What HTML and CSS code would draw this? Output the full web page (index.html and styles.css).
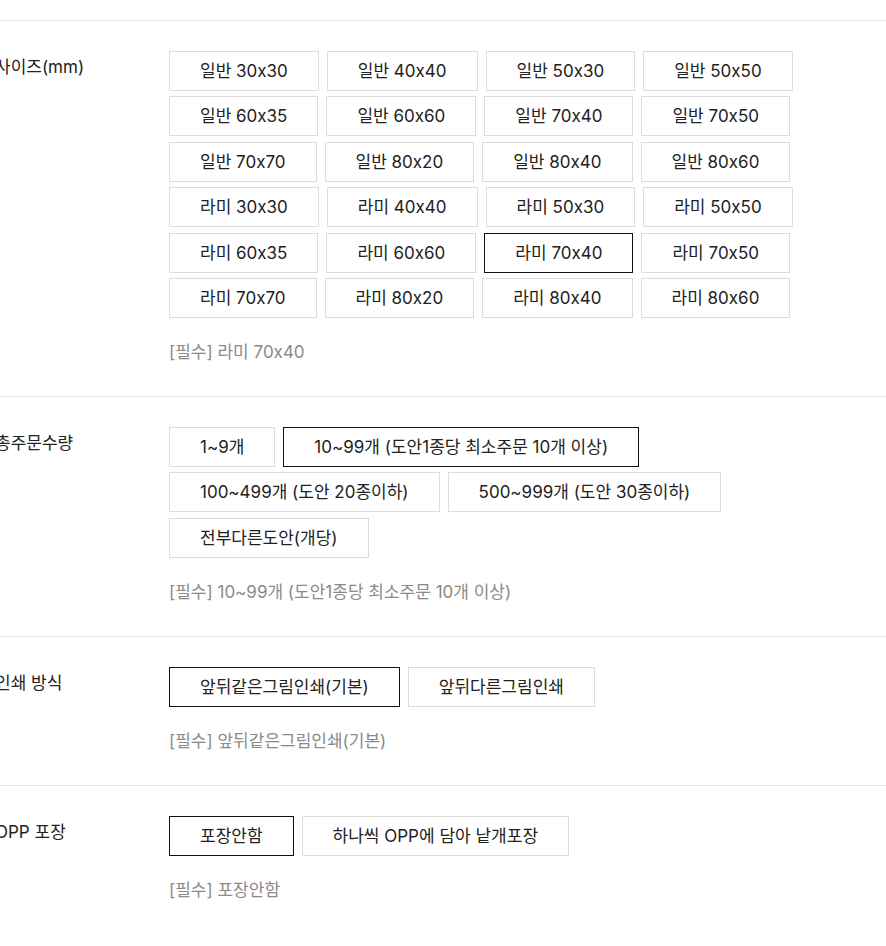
FILE: index.html
```html
<!DOCTYPE html>
<html lang="ko">
<head>
<meta charset="utf-8">
<title>옵션 선택</title>
<link rel="stylesheet" href="styles.css">
</head>
<body>
<div class="page">
  <section class="opt-row">
    <div class="opt-label">사이즈(mm)</div>
    <div class="opt-body">
      <div class="choices">
        <button class="choice">일반 30x30</button>
        <button class="choice">일반 40x40</button>
        <button class="choice">일반 50x30</button>
        <button class="choice">일반 50x50</button>
        <button class="choice">일반 60x35</button>
        <button class="choice">일반 60x60</button>
        <button class="choice">일반 70x40</button>
        <button class="choice">일반 70x50</button>
        <button class="choice">일반 70x70</button>
        <button class="choice">일반 80x20</button>
        <button class="choice">일반 80x40</button>
        <button class="choice">일반 80x60</button>
        <button class="choice">라미 30x30</button>
        <button class="choice">라미 40x40</button>
        <button class="choice">라미 50x30</button>
        <button class="choice">라미 50x50</button>
        <button class="choice">라미 60x35</button>
        <button class="choice">라미 60x60</button>
        <button class="choice is-selected">라미 70x40</button>
        <button class="choice">라미 70x50</button>
        <button class="choice">라미 70x70</button>
        <button class="choice">라미 80x20</button>
        <button class="choice">라미 80x40</button>
        <button class="choice">라미 80x60</button>
      </div>
      <p class="opt-note">[필수] 라미 70x40</p>
    </div>
  </section>

  <section class="opt-row">
    <div class="opt-label">총주문수량</div>
    <div class="opt-body">
      <div class="choices">
        <button class="choice">1~9개</button>
        <button class="choice is-selected">10~99개 (도안1종당 최소주문 10개 이상)</button>
        <button class="choice">100~499개 (도안 20종이하)</button>
        <button class="choice">500~999개 (도안 30종이하)</button>
        <button class="choice">전부다른도안(개당)</button>
      </div>
      <p class="opt-note">[필수] 10~99개 (도안1종당 최소주문 10개 이상)</p>
    </div>
  </section>

  <section class="opt-row">
    <div class="opt-label">인쇄 방식</div>
    <div class="opt-body">
      <div class="choices">
        <button class="choice is-selected">앞뒤같은그림인쇄(기본)</button>
        <button class="choice">앞뒤다른그림인쇄</button>
      </div>
      <p class="opt-note">[필수] 앞뒤같은그림인쇄(기본)</p>
    </div>
  </section>

  <section class="opt-row">
    <div class="opt-label">OPP 포장</div>
    <div class="opt-body">
      <div class="choices">
        <button class="choice is-selected">포장안함</button>
        <button class="choice">하나씩 OPP에 담아 낱개포장</button>
      </div>
      <p class="opt-note">[필수] 포장안함</p>
    </div>
  </section>
</div>
</body>
</html>
```

FILE: styles.css
```css
* { box-sizing: border-box; }

html, body {
  margin: 0;
  padding: 0;
  background: #fff;
}

body {
  font-family: Inter, "Noto Sans CJK KR", sans-serif;
  font-size: 17px;
  color: #222;
  overflow: hidden;
}

.page {
  padding-top: 20px;
  margin-left: -5px;
}

.opt-row {
  display: grid;
  grid-template-columns: 174px 1fr;
  border-top: 1px solid #e6e6e6;
  padding: 30px 0 33px;
}

.opt-label {
  padding-top: 5px;
  line-height: 22px;
  color: #222;
  white-space: nowrap;
}

.opt-body {
  min-width: 0;
}

.choices {
  display: flex;
  flex-wrap: wrap;
  gap: 5.4px 8px;
}

.choice {
  height: 40px;
  padding: 0 30px;
  border: 1px solid #dcdcdc;
  background: #fff;
  color: #222;
  font: inherit;
  line-height: 22px;
  white-space: nowrap;
  cursor: pointer;
  display: inline-flex;
  align-items: center;
  justify-content: center;
}

.choice.is-selected {
  border-color: #111;
}

.opt-note {
  margin: 23px 0 0;
  line-height: 22px;
  color: #8a8a8a;
}
```
